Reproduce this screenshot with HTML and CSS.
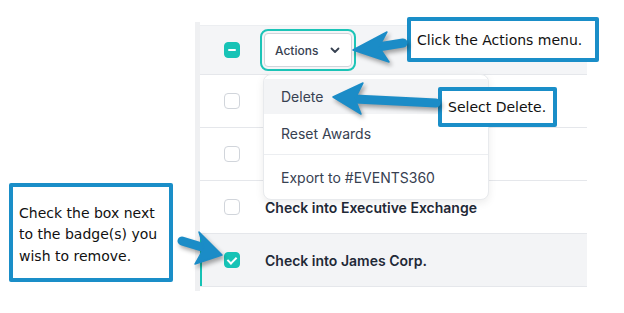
FILE: index.html
```html
<!DOCTYPE html>
<html lang="en">
<head>
  <meta charset="UTF-8" />
  <title>Badges - Actions</title>
  <link rel="stylesheet" href="styles.css">
</head>
<body>

  <div class="table-wrap">
    <div class="table">
      <div class="row head">
        <span class="check partial"></span>
        <button class="actions-btn">Actions
          <svg width="12" height="12" viewBox="0 0 12 12"><path d="M2.5 4.5 L6 8 L9.5 4.5" fill="none" stroke="#374151" stroke-width="1.8" stroke-linecap="round" stroke-linejoin="round"/></svg>
        </button>
      </div>
      <div class="row"><span class="check"></span><span class="name"></span></div>
      <div class="row"><span class="check"></span><span class="name"></span></div>
      <div class="row"><span class="check"></span><span class="name">Check into Executive Exchange</span></div>
      <div class="row selected"><span class="check checked"></span><span class="name">Check into James Corp.</span></div>
    </div>

    <!-- dropdown menu -->
    <div class="menu">
      <div class="menu-item active">Delete</div>
      <div class="menu-item">Reset Awards</div>
      <div class="menu-item divided">Export to #EVENTS360</div>
    </div>
  </div>

  <!-- callouts -->
  <div class="callout c1">Click the Actions menu.</div>
  <div class="callout c2">Select Delete.</div>
  <div class="callout c3">Check the box next to the badge(s) you wish to remove.</div>

  <svg class="arrows" width="624" height="313" viewBox="0 0 624 313">
    <g fill="#1b8cc7" stroke="#1b8cc7">
      <line x1="403" y1="43" x2="378" y2="47" stroke-width="9" stroke-linecap="round"/>
      <polygon points="353,50 387,32 379,47 389,62" stroke-width="1.5" stroke-linejoin="round"/>
      <line x1="436" y1="103" x2="355" y2="99" stroke-width="9" stroke-linecap="round"/>
      <polygon points="333,97 363,83 355,99 361,114" stroke-width="1.5" stroke-linejoin="round"/>
      <line x1="182" y1="241" x2="205" y2="248" stroke-width="9" stroke-linecap="round"/>
      <polygon points="222,255 199,232 204,248 195,264" stroke-width="1.5" stroke-linejoin="round"/>
    </g>
  </svg>

</body>
</html>
```

FILE: styles.css
```css
body {
  margin: 0;
  background: #ffffff;
  font-family: 'Inter', 'Liberation Sans', sans-serif;
  width: 624px;
  height: 313px;
  overflow: hidden;
  position: relative;
}

.table-wrap {
  position: relative;
  margin: 22px 0 0 195px;
  width: 387px;
  border-left: 5px solid #eff0f2;
  padding: 3px 0 4px;
}

.row {
  display: flex;
  align-items: center;
  height: 52px;
  padding-left: 24px;
  border-bottom: 1px solid #e5e7eb;
  box-sizing: content-box;
}

.row.head {
  height: 48px;
  background: #f4f5f7;
  border-top: 1px solid #eceef1;
}

.row.selected {
  background: #f3f4f6;
  box-shadow: inset 2px 0 0 #16c2b5;
}

.check {
  width: 14px;
  height: 14px;
  border: 1px solid #d1d5db;
  border-radius: 4px;
  background: #fff;
  flex-shrink: 0;
  position: relative;
}

.check.partial,
.check.checked {
  background: #17c3b6;
  border-color: #17c3b6;
}

.check.partial::after {
  content: "";
  position: absolute;
  left: 3px;
  top: 6px;
  width: 8px;
  height: 2px;
  background: #fff;
  border-radius: 1px;
}

.check.checked::after {
  content: "";
  position: absolute;
  left: 4px;
  top: 2px;
  width: 4px;
  height: 7px;
  border: solid #fff;
  border-width: 0 2px 2px 0;
  transform: rotate(45deg);
}

.name {
  margin-left: 25px;
  font-size: 14px;
  font-weight: 600;
  color: #1f2937;
}

.actions-btn {
  margin-left: 24px;
  width: 88px;
  height: 34px;
  background: #fff;
  border: 1px solid #d1d5db;
  border-radius: 4px;
  outline: 2px solid #1cc4b7;
  outline-offset: 2px;
  font-family: inherit;
  font-size: 12px;
  font-weight: 500;
  color: #374151;
  display: flex;
  align-items: center;
  justify-content: space-between;
  padding: 0 10px 0 10px;
}

.menu {
  position: absolute;
  left: 63px;
  top: 52px;
  width: 224px;
  background: #fff;
  border: 1px solid #e8eaed;
  border-radius: 8px;
  box-shadow: 0 3px 8px rgba(0, 0, 0, 0.08);
  padding: 4px 0 0;
}

.menu-item {
  height: 36px;
  line-height: 36px;
  padding-left: 17px;
  font-size: 14px;
  color: #374151;
}

.menu-item.active {
  background: #f3f4f6;
  height: 35px;
  line-height: 35px;
}

.menu-item + .menu-item {
  height: 40px;
  line-height: 40px;
}

.menu-item.divided {
  border-top: 1px solid #eceef1;
  height: 44px;
  line-height: 45px;
}

.callout {
  position: absolute;
  background: #fff;
  border: 4px solid #1a8ec8;
  border-radius: 2px;
  font-family: 'DejaVu Sans', Verdana, sans-serif;
  font-size: 14px;
  color: #111;
  box-sizing: border-box;
  display: flex;
  align-items: center;
}

.c1 {
  left: 407px;
  top: 17px;
  width: 192px;
  height: 45px;
  padding-left: 6px;
}

.c2 {
  left: 438px;
  top: 87px;
  width: 119px;
  height: 40px;
  padding-left: 6px;
}

.c3 {
  left: 9px;
  top: 183px;
  width: 164px;
  height: 99px;
  padding: 5px 4px 0 6px;
  line-height: 21.5px;
}

.arrows {
  position: absolute;
  left: 0;
  top: 0;
  pointer-events: none;
  filter: drop-shadow(2px 3px 2px rgba(0, 0, 0, 0.35));
}
```
